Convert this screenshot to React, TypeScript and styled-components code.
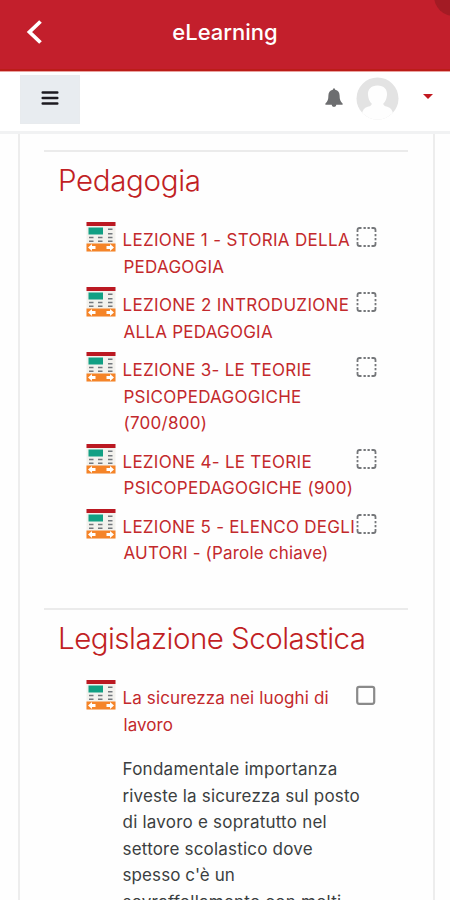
import React from "react";
import styled, { createGlobalStyle } from "styled-components";

const GlobalStyle = createGlobalStyle`
  * { box-sizing: border-box; }
  html, body { margin: 0; padding: 0; background: #fff; }
  body { font-family: Inter, "Liberation Sans", sans-serif; overflow: hidden; }
`;

const Screen = styled.div`
  width: 450px;
  height: 900px;
  overflow: hidden;
  display: flex;
  flex-direction: column;
  background: #fefefe;
`;

const AppHeader = styled.header`
  position: relative;
  flex: none;
  height: 72px;
  display: grid;
  grid-template-columns: 70px 1fr 70px;
  align-items: center;
  padding-bottom: 7px;
  background: #c31f2c;
  border-bottom: 1px solid #e9a29f;
  box-shadow: inset 0 -2px 0 #bb1c18;
  overflow: hidden;
`;

const BackButton = styled.button`
  justify-self: start;
  display: flex;
  margin: 0 0 0 25px;
  padding: 0;
  border: 0;
  background: none;
`;

const HeaderTitle = styled.h1`
  margin: 0;
  text-align: center;
  color: #fff;
  font-size: 22px;
  font-weight: 500;
  line-height: 30px;
  white-space: nowrap;
`;

const CornerShade = styled.span`
  position: absolute;
  top: -24px;
  right: -24px;
  width: 40px;
  height: 40px;
  border-radius: 50%;
  background: #a31b24;
`;

const Toolbar = styled.nav`
  flex: none;
  height: 62px;
  display: flex;
  align-items: flex-start;
  padding: 3px 17px 0 20px;
  background: #fff;
  border-bottom: 3px solid #f1f2f3;
`;

const MenuButton = styled.button`
  width: 60px;
  height: 49px;
  display: flex;
  align-items: center;
  justify-content: center;
  margin: 0;
  padding: 0 1px 3px 0;
  border: 1px solid #e8ebee;
  background: #e8ecf0;
`;

const UserTools = styled.div`
  margin-left: auto;
  display: flex;
  align-items: center;
  height: 46px;
`;

const Avatar = styled.span`
  display: flex;
  margin: 1px 24px 0 13px;
`;

const Caret = styled.span`
  margin-bottom: 3px;
  border: 5px solid transparent;
  border-top-color: #c11920;
  border-bottom: 0;
`;

const Card = styled.main`
  flex: 1;
  min-height: 0;
  overflow: hidden;
  margin: 0 15px 0 18px;
  padding: 16px 25px 0 24px;
  border: 2px solid #ededed;
  border-width: 0 2px;
`;

const Section = styled.section<{ $height?: number }>`
  height: ${(p) => (p.$height ? `${p.$height}px` : "auto")};
  border-top: 2px solid #ebebeb;
  padding-top: 9px;
`;

const SectionTitle = styled.h2<{ $spacing: number }>`
  margin: 0 0 28px 14px;
  color: #c11f24;
  font-size: 29.5px;
  font-weight: 300;
  line-height: 38px;
  letter-spacing: ${(p) => p.$spacing}px;
  white-space: nowrap;
`;

const LessonList = styled.ul`
  list-style: none;
  margin: 0;
  padding: 0 0 0 41px;
  display: flex;
  flex-direction: column;
  gap: 12px;
`;

const Lesson = styled.li`
  display: grid;
  grid-template-columns: 37.5px 233px 22px;
  align-items: start;
`;

const LessonIconBox = styled.span`
  display: flex;
  margin: -5px 0 0 0.5px;
`;

const LessonLink = styled.a`
  display: block;
  color: #c3292c;
  font-size: 17px;
  line-height: 26.5px;
`;

const Line = styled.span<{ $spacing?: number; $indent?: number }>`
  display: block;
  padding-left: ${(p) => p.$indent ?? 0}px;
  letter-spacing: ${(p) => p.$spacing ?? 0}px;
  white-space: nowrap;
`;

const CheckBoxSlot = styled.span<{ $raised: boolean }>`
  display: flex;
  margin-top: ${(p) => (p.$raised ? -1 : 0)}px;
`;

const Description = styled.p`
  margin: 18px 0 0 78.5px;
  color: #3b3e41;
  font-size: 17px;
  line-height: 26.5px;
`;

type TextLine = [text: string, spacing: number];

const lessons: TextLine[][] = [
  [["LEZIONE 1 - STORIA DELLA", 0.31], ["PEDAGOGIA", 0.25]],
  [["LEZIONE 2 INTRODUZIONE", 0.33], ["ALLA PEDAGOGIA", 0.24]],
  [["LEZIONE 3- LE TEORIE", 0.29], ["PSICOPEDAGOGICHE", 0.26], ["(700/800)", 0.28]],
  [["LEZIONE 4- LE TEORIE", 0.27], ["PSICOPEDAGOGICHE (900)", 0.31]],
  [["LEZIONE 5 - ELENCO DEGLI", 0.27], ["AUTORI - (Parole chiave)", 0.19]],
];

const safety: TextLine[][] = [
  [["La sicurezza nei luoghi di", 0.13], ["lavoro", 0.07]],
];

const description: TextLine[] = [
  ["Fondamentale importanza", 0.27],
  ["riveste la sicurezza sul posto", 0.17],
  ["di lavoro e sopratutto nel", 0.22],
  ["settore scolastico dove", 0.2],
  ["spesso c'è un", 0.09],
  ["sovraffollamento con molti", 0.23],
];

const LessonIcon = () => (
  <svg width="30" height="30" viewBox="0 0 30 30">
    <rect x="0.5" y="0.5" width="29" height="29" fill="#f3f2ee" />
    <rect x="0.5" y="0" width="29" height="4" fill="#bb1922" />
    <rect x="2.5" y="5.5" width="14.5" height="7" fill="#12a084" />
    <path d="M22 7.2h4.5M22 11.8h4.5M22 15.5h4.5M22 19.2h4.5M3 15.5h4.5M12 15.5h4.5M3 19.2h4.5M12 19.2h4.5" stroke="#74797e" strokeWidth="1.4" />
    <rect x="0.5" y="21.5" width="29" height="8" fill="#f58428" />
    <path d="M2 25.5l4-3.500v2h3.500v3h-3.500v2zM28 25.500l-4-3.500v2h-3.500v3h3.500v2z" fill="#fff" />
  </svg>
);

const CompletionBox = ({ dashed }: { dashed: boolean }) =>
  dashed ? (
    <svg width="22" height="22" viewBox="0 0 22 22" fill="none" stroke="#75777a" strokeWidth="1.8">
      <path d="M1.500 6V4q0-2 2-2h2M15.500 2h2q2 0 2 2v2M19.500 16v2q0 2-2 2h-2M5.500 20h-2q-2 0-2-2v-2" />
      <path d="M7.500 2h2.300M11.500 2h2.300M7.500 20h2.300M11.500 20h2.300M1.500 8v2.300M1.500 12v2.300M19.500 8v2.300M19.500 12v2.300" />
    </svg>
  ) : (
    <svg width="22" height="22" viewBox="0 0 22 22" fill="none">
      <rect x="1.2" y="1.8" width="17" height="17" rx="2" stroke="#8a8a8a" strokeWidth="2.2" />
    </svg>
  );

const Lessons = ({ items, dashed }: { items: TextLine[][]; dashed: boolean }) => (
  <LessonList>
    {items.map((lines) => (
      <Lesson key={lines[0][0]}>
        <LessonIconBox><LessonIcon /></LessonIconBox>
        <LessonLink>
          {lines.map(([text, spacing], i) => (
            <Line key={text} $spacing={spacing} $indent={i ? 1 : 0}>{text}</Line>
          ))}
        </LessonLink>
        <CheckBoxSlot $raised={dashed}><CompletionBox dashed={dashed} /></CheckBoxSlot>
      </Lesson>
    ))}
  </LessonList>
);

export default function App() {
  return (
    <Screen>
      <GlobalStyle />
      <AppHeader>
        <BackButton aria-label="Indietro">
          <svg width="20" height="28" viewBox="0 0 20 28" fill="none" stroke="#fff" strokeWidth="3.8">
            <path d="M15.5 3.5L4.5 14l11 10.5" />
          </svg>
        </BackButton>
        <HeaderTitle>eLearning</HeaderTitle>
        <CornerShade />
      </AppHeader>
      <Toolbar>
        <MenuButton aria-label="Menu">
          <svg width="18" height="16" viewBox="0 0 18 16" stroke="#1c1a20" strokeWidth="2.5" strokeLinecap="round">
            <path d="M1.7 2.5h14.6M1.7 8h14.6M1.7 13.5h14.6" />
          </svg>
        </MenuButton>
        <UserTools>
          <svg width="18" height="20" viewBox="0 0 18 20" fill="#6d6e70">
            <path d="M9 0.3q1.2 0 1.2 1.5c3 .6 4.4 2.8 4.4 5.7 0 4 .8 6.3 3 8v1.2H.4v-1.2c2.2-1.7 3-4 3-8 0-2.900 1.400-5.100 4.400-5.700Q7.800.3 9 .3zM6.600 16.500h4.800a2.400 2.400 0 0 1-4.800 0z" />
          </svg>
          <Avatar>
            <svg width="43" height="43" viewBox="0 0 43 43">
              <defs><clipPath id="avatar"><circle cx="21.500" cy="21.500" r="21" /></clipPath></defs>
              <g clipPath="url(#avatar)">
                <rect width="43" height="43" fill="#e3e3e3" />
                <path d="M21.500 8.500c6.500 0 10 4 9.500 9.500-.4 4-1.500 6.500-3.700 8.500 0 2 1 2.500 4 3.300 3.500 1 5 3.500 6 7.200V43H5.700v-6c1-3.700 2.500-6.200 6-7.200 3-.8 4-1.300 4-3.300-2.200-2-3.300-4.500-3.700-8.500-.5-5.500 3-9.500 9.500-9.500z" fill="#fefefe" />
              </g>
            </svg>
          </Avatar>
          <Caret />
        </UserTools>
      </Toolbar>
      <Card>
        <Section $height={458}>
          <SectionTitle $spacing={-0.33}>Pedagogia</SectionTitle>
          <Lessons items={lessons} dashed />
        </Section>
        <Section>
          <SectionTitle $spacing={-0.52}>Legislazione Scolastica</SectionTitle>
          <Lessons items={safety} dashed={false} />
          <Description>
            {description.map(([text, spacing]) => (
              <Line key={text} $spacing={spacing}>{text}</Line>
            ))}
          </Description>
        </Section>
      </Card>
    </Screen>
  );
}
